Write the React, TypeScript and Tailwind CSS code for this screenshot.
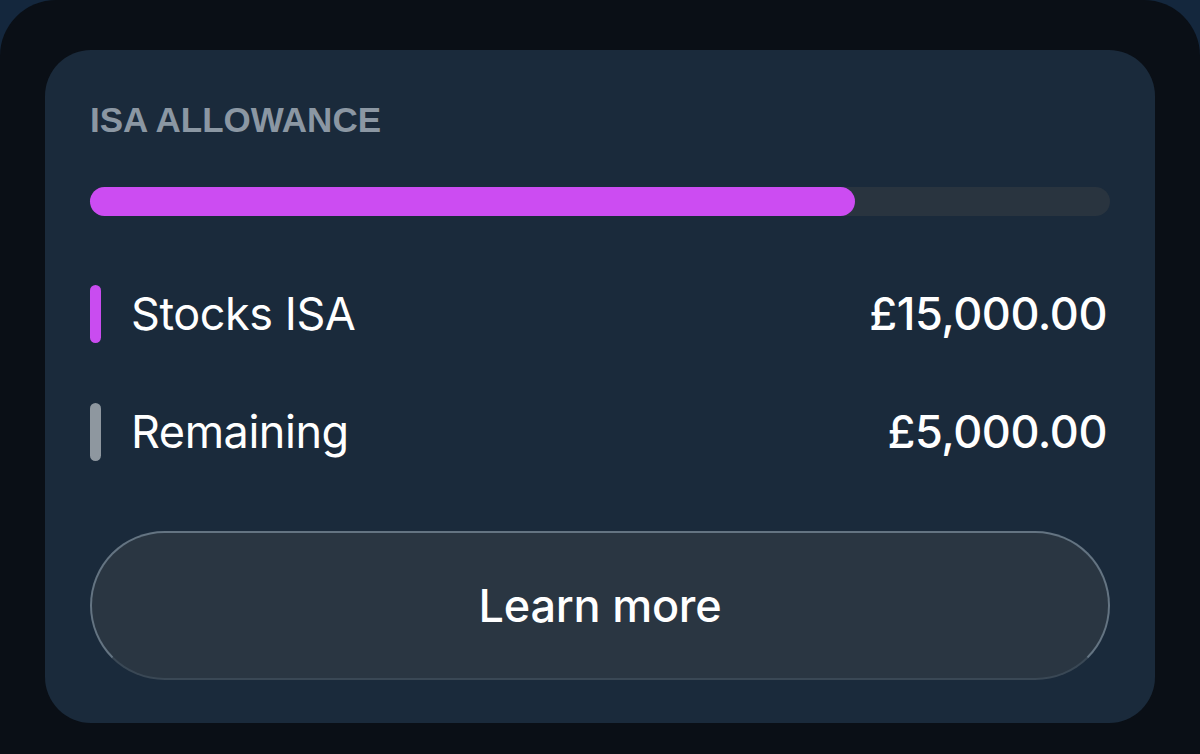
const rows = [
  { label: "Stocks ISA", amount: "£15,000.00", bar: "bg-[#c94cf0]" },
  { label: "Remaining", amount: "£5,000.00", bar: "bg-[#8e979f]" },
];

export default function App() {
  return (
    <div className="h-[754px] w-[1200px] overflow-hidden bg-[#14273d]">
      <div className="h-full w-full rounded-t-[56px] bg-[#0a0f16] px-[45px] pt-[50px]">
        <div
          className="flex h-[673px] flex-col rounded-[46px] bg-[#1a2a3b] px-[45px] pt-[52px]"
          style={{ fontFamily: "Inter, 'Noto Sans', sans-serif" }}
        >
          <div
            className="text-[35px] font-bold leading-none text-[#8b97a3]"
            style={{ fontFamily: "'Liberation Sans', Arial, sans-serif" }}
          >
            ISA ALLOWANCE
          </div>

          <div className="mt-[50px] h-[29px] w-full rounded-full bg-[#29343f]">
            <div className="h-full w-[75%] rounded-full bg-[#cc4cf2]" />
          </div>

          <div className="mt-[69px] flex flex-col gap-[60px]">
            {rows.map((row) => (
              <div key={row.label} className="flex h-[58px] items-center">
                <div className={`h-[58px] w-[11px] rounded-full ${row.bar}`} />
                <span className="ml-[30px] text-[45px] font-normal tracking-[-0.01em] text-white">
                  {row.label}
                </span>
                <span className="ml-auto pr-[3px] text-[45px] font-medium tracking-[-0.01em] text-white">
                  {row.amount}
                </span>
              </div>
            ))}
          </div>

          <button className="mt-[70px] flex h-[149px] w-full items-center justify-center rounded-full border-2 border-[#647482] border-b-[#3a4855] bg-[#2a3642] text-[45px] font-medium tracking-[-0.005em] text-white">
            Learn more
          </button>
        </div>
      </div>
    </div>
  );
}
